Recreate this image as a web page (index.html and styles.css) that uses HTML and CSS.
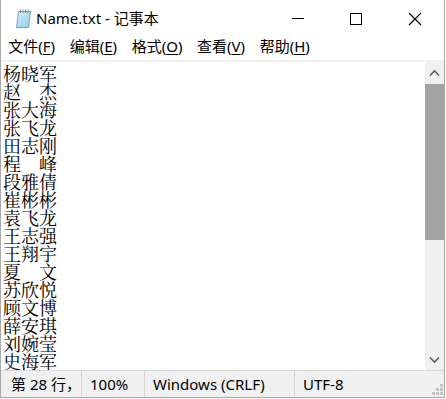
FILE: index.html
```html
<!DOCTYPE html>
<html lang="zh-CN">
<head>
<meta charset="utf-8">
<title>Name.txt - 记事本</title>
<link rel="stylesheet" href="styles.css">
</head>
<body>
<div class="window">
  <div class="titlebar">
    <svg class="app-icon" width="20" height="20" viewBox="0 0 20 20">
      <defs>
        <linearGradient id="pg" x1="0" y1="0" x2="1" y2="1">
          <stop offset="0" stop-color="#dcf1fa"/>
          <stop offset="1" stop-color="#8ecbe2"/>
        </linearGradient>
      </defs>
      <path d="M5.5 3.5 L17.5 3.5 L15.5 19.5 L3.5 19.5 Z" fill="url(#pg)" stroke="#6ea9c4"/>
      <path d="M6.6 8h9M6.2 11h9M5.8 14h9M5.4 17h9" stroke="#b2dcec" stroke-width="0.8"/>
      <path d="M7.5 1.5v3.5M10 1.5v3.5M12.5 1.5v3.5M15 1.5v3.5" stroke="#7d8b94" stroke-width="1"/>
    </svg>
    <span class="title">Name.txt - 记事本</span>
    <div class="controls">
      <div class="ctl">
        <svg width="58" height="32" viewBox="0 0 58 32"><path d="M22 18.5h12" stroke="#000" stroke-width="1"/></svg>
      </div>
      <div class="ctl">
        <svg width="58" height="32" viewBox="0 0 58 32"><rect x="22.5" y="13.5" width="11" height="11" fill="none" stroke="#000" stroke-width="1"/></svg>
      </div>
      <div class="ctl">
        <svg width="58" height="32" viewBox="0 0 58 32"><path d="M23 13l12 12M35 13l-12 12" stroke="#000" stroke-width="1.1"/></svg>
      </div>
    </div>
  </div>
  <div class="menubar">
    <span class="menu-item">文件(<u>F</u>)</span>
    <span class="menu-item">编辑(<u>E</u>)</span>
    <span class="menu-item">格式(<u>O</u>)</span>
    <span class="menu-item">查看(<u>V</u>)</span>
    <span class="menu-item">帮助(<u>H</u>)</span>
  </div>
  <div class="menu-sep"></div>
  <div class="main">
    <div class="editor">
      <div class="line">杨晓军</div>
      <div class="line">赵　杰</div>
      <div class="line">张大海</div>
      <div class="line">张飞龙</div>
      <div class="line">田志刚</div>
      <div class="line">程　峰</div>
      <div class="line">段雅倩</div>
      <div class="line">崔彬彬</div>
      <div class="line">袁飞龙</div>
      <div class="line">王志强</div>
      <div class="line">王翔宇</div>
      <div class="line">夏　文</div>
      <div class="line">苏欣悦</div>
      <div class="line">顾文博</div>
      <div class="line">薛安琪</div>
      <div class="line">刘婉莹</div>
      <div class="line">史海军</div>
    </div>
    <div class="scrollbar">
      <div class="sb-arrow">
        <svg width="19" height="22" viewBox="0 0 19 22"><path d="M5 13.5l4.5-4.5 4.5 4.5" fill="none" stroke="#606060" stroke-width="1.6"/></svg>
      </div>
      <div class="sb-thumb"></div>
      <div class="sb-track"></div>
      <div class="sb-arrow">
        <svg width="19" height="22" viewBox="0 0 19 22"><path d="M5 9.5l4.5 4.5 4.5-4.5" fill="none" stroke="#606060" stroke-width="1.6"/></svg>
      </div>
    </div>
  </div>
  <div class="statusbar">
    <span class="st st-pos">第 28 行，</span>
    <span class="st st-zoom">100%</span>
    <span class="st st-eol">Windows (CRLF)</span>
    <span class="st st-enc">UTF-8</span>
    <svg class="grip" width="12" height="12" viewBox="0 0 12 12">
      <rect x="8" y="0" width="3" height="3" fill="#c4c4c4"/>
      <rect x="4" y="4" width="3" height="3" fill="#c4c4c4"/>
      <rect x="8" y="4" width="3" height="3" fill="#c4c4c4"/>
      <rect x="0" y="8" width="3" height="3" fill="#c4c4c4"/>
      <rect x="4" y="8" width="3" height="3" fill="#c4c4c4"/>
      <rect x="8" y="8" width="3" height="3" fill="#c4c4c4"/>
    </svg>
  </div>
</div>
</body>
</html>
```
FILE: styles.css
```css
* { box-sizing: border-box; }
html, body { margin: 0; padding: 0; background: #ffffff; }
body { width: 446px; height: 399px; overflow: hidden; }

.window {
  width: 445px;
  height: 398px;
  border-left: 1px solid #a9a9a9;
  border-right: 1px solid #a9a9a9;
  border-bottom: 1px solid #a9a9a9;
  background: #ffffff;
  display: flex;
  flex-direction: column;
  font-family: "Segoe UI", "Noto Sans", "Noto Sans CJK SC", sans-serif;
  color: #000;
}

.titlebar {
  height: 32px;
  display: flex;
  align-items: flex-start;
  padding-left: 12px;
  flex: none;
}
.app-icon { margin-top: 8px; flex: none; }
.title {
  font-size: 15px;
  line-height: 28px;
  padding-top: 4px;
  margin-left: 3px;
  white-space: nowrap;
}
.controls { margin-left: auto; display: flex; }
.ctl { width: 58px; height: 32px; }
.ctl svg { display: block; }

.menubar {
  height: 28px;
  display: flex;
  flex: none;
  font-family: "Segoe UI", "Noto Sans", "Noto Sans CJK SC", sans-serif;
  font-size: 15px;
  line-height: 27px;
  padding-top: 1px;
}
.menu-item { padding: 0 7.3px; white-space: nowrap; }
.menu-item u { text-underline-offset: 2px; }

.menu-sep { height: 2px; background: #f0f0f0; flex: none; }

.main {
  height: 308px;
  display: flex;
  flex: none;
}
.editor {
  flex: 1;
  overflow: hidden;
  padding: 2px 0 0 2px;
  font-family: "SimSun", "Noto Serif CJK SC", "Noto Sans CJK SC", serif;
  font-size: 18px;
  line-height: 18px;
  color: #000;
}
.line { white-space: pre; height: 18px; }

.scrollbar {
  width: 19px;
  flex: none;
  display: flex;
  flex-direction: column;
  background: #f0f0f0;
}
.sb-arrow { height: 22px; flex: none; }
.sb-arrow svg { display: block; }
.sb-thumb { height: 156px; background: #a3a3a3; flex: none; }
.sb-track { flex: 1; }

.statusbar {
  flex: 1;
  border-top: 1px solid #dadada;
  background: #f0f0f0;
  display: flex;
  align-items: stretch;
  font-size: 15px;
  line-height: 26px;
  position: relative;
}
.st { white-space: nowrap; padding-left: 8px; }
.st-pos { width: 80px; padding-left: 10px; }
.st-zoom { width: 63px; border-left: 1px solid #d7d7d7; }
.st-eol { width: 150px; border-left: 1px solid #d7d7d7; }
.st-enc { border-left: 1px solid #d7d7d7; }
.grip { position: absolute; right: 0; bottom: 1px; }
```
